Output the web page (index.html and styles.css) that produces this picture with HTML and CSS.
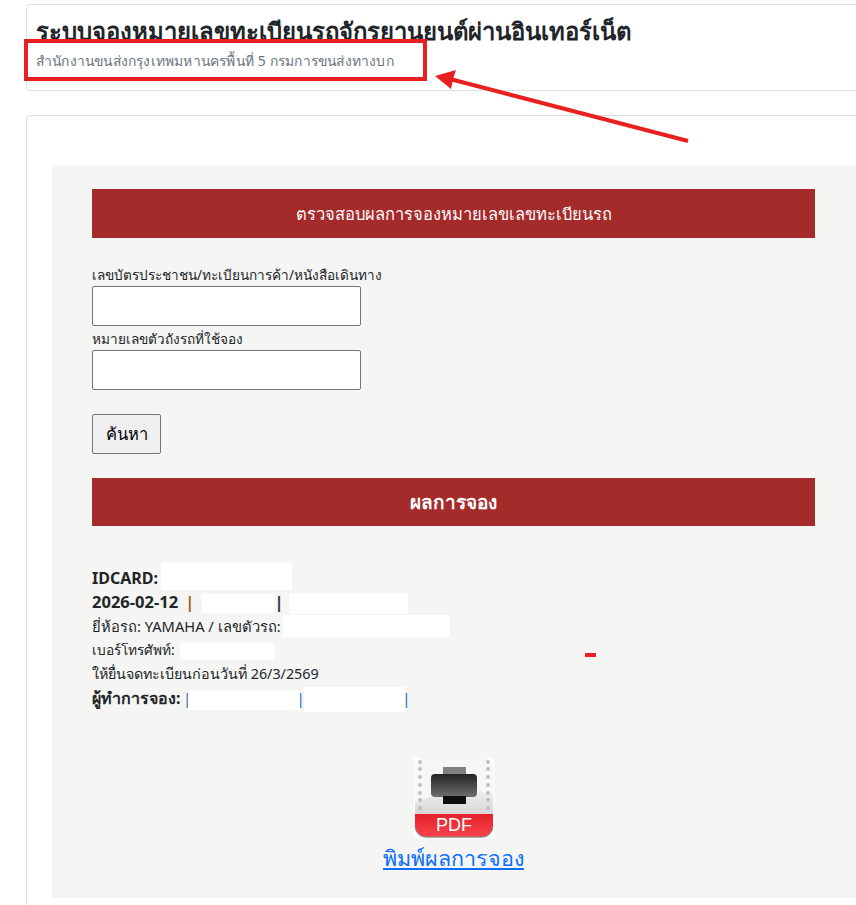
FILE: index.html
```html
<!DOCTYPE html>
<html lang="th">
<head>
    <meta charset="UTF-8">
    <meta name="viewport" content="width=device-width, initial-scale=1.0">
    <title>ตรวจสอบผลการจอง</title>
    <link rel="stylesheet" href="styles.css">
</head>
<body>
    <div class="page">
        <div class="card header-card">
            <h1>ระบบจองหมายเลขทะเบียนรถจักรยานยนต์ผ่านอินเทอร์เน็ต</h1>
            <p class="subtitle">สำนักงานขนส่งกรุงเทพมหานครพื้นที่ 5 กรมการขนส่งทางบก</p>
        </div>
        <div class="card main-card">
            <div class="panel">
                <div class="bar">ตรวจสอบผลการจองหมายเลขเลขทะเบียนรถ</div>
                <form class="search-form">
                    <label for="idcard">เลขบัตรประชาชน/ทะเบียนการค้า/หนังสือเดินทาง</label>
                    <input type="text" id="idcard">
                    <label for="plate">หมายเลขตัวถังรถที่ใช้จอง</label>
                    <input type="text" id="plate">
                    <button type="button">ค้นหา</button>
                </form>
                <div class="bar bar-bold">ผลการจอง</div>
                <div class="result">
                    <div class="row row-strong">IDCARD:</div>
                    <div class="row row-strong row-day">2026-02-12 <span class="sep-orange">|</span><span class="sep-dark">|</span></div>
                    <div class="row row-brand">ยี่ห้อรถ: YAMAHA / เลขตัวรถ:</div>
                    <div class="row row-phone">เบอร์โทรศัพท์:</div>
                    <div class="row row-date">ให้ยื่นจดทะเบียนก่อนวันที่ 26/3/2569</div>
                    <div class="row row-by"><strong>ผู้ทำการจอง:</strong> <span class="sep-blue sep-start">|</span><span class="sep-blue sep-mid">|</span><span class="sep-blue sep-end">|</span></div>
                    <span class="mask mask-id"></span>
                    <span class="mask mask-date-a"></span>
                    <span class="mask mask-date-b"></span>
                    <span class="mask mask-chassis"></span>
                    <span class="mask mask-phone"></span>
                    <span class="mask mask-by-a"></span>
                    <span class="mask mask-by-b"></span>
                    <span class="dash"></span>
                </div>
                <div class="print">
                    <svg class="pdf-icon" width="80" height="80" viewBox="0 0 80 80">
                        <defs>
                            <linearGradient id="body" x1="0" y1="0" x2="0" y2="1">
                                <stop offset="0" stop-color="#f4f4f4"/>
                                <stop offset="0.45" stop-color="#ececec"/>
                                <stop offset="0.7" stop-color="#d6d6d6"/>
                            </linearGradient>
                            <linearGradient id="red" x1="0" y1="0" x2="0" y2="1">
                                <stop offset="0" stop-color="#e5212a"/>
                                <stop offset="1" stop-color="#f8434c"/>
                            </linearGradient>
                            <linearGradient id="ink" x1="0" y1="0" x2="0" y2="1">
                                <stop offset="0" stop-color="#232323"/>
                                <stop offset="1" stop-color="#6e6e6e"/>
                            </linearGradient>
                        </defs>
                        <rect width="80" height="80" fill="#fff"/>
                        <rect x="1" y="0" width="78" height="80" rx="11" fill="url(#body)"/>
                        <path d="M1 11A11 11 0 0 1 12 0H68A11 11 0 0 1 79 11V36C60 30 25 34 1 44Z" fill="#f6f6f6"/>
                        <path d="M1 56H79V68A11 11 0 0 1 68 79H12A11 11 0 0 1 1 68Z" fill="url(#red)"/>
                        <path d="M1 68A11 11 0 0 0 12 79H68A11 11 0 0 0 79 68" fill="none" stroke="#8a8a8a" stroke-width="1"/>
                        <g fill="#bdbdbd">
                            <circle cx="6" cy="4" r="1.9"/><circle cx="6" cy="11" r="1.9"/><circle cx="6" cy="19" r="1.9"/><circle cx="6" cy="27" r="1.9"/><circle cx="6" cy="35" r="1.9"/><circle cx="6" cy="42" r="1.9"/><circle cx="6" cy="50" r="1.9"/>
                            <circle cx="74" cy="4" r="1.9"/><circle cx="74" cy="11" r="1.9"/><circle cx="74" cy="19" r="1.9"/><circle cx="74" cy="27" r="1.9"/><circle cx="74" cy="35" r="1.9"/><circle cx="74" cy="42" r="1.9"/><circle cx="74" cy="50" r="1.9"/>
                        </g>
                        <rect x="29" y="9" width="23" height="9" fill="#808080"/>
                        <rect x="17" y="16" width="46" height="23" rx="4" fill="url(#ink)"/>
                        <rect x="29" y="38" width="23" height="8" fill="#0d0d0d"/>
                        <text x="40" y="72.5" class="pdf-text" text-anchor="middle">PDF</text>
                    </svg>
                    <a href="#">พิมพ์ผลการจอง</a>
                </div>
            </div>
        </div>

        <!-- annotation drawn on the screenshot -->
        <svg class="annotation" width="856" height="180" viewBox="0 0 856 180">
            <rect x="26" y="41" width="399" height="38" fill="none" stroke="#e82020" stroke-width="4"/>
            <line x1="688" y1="141" x2="450" y2="79" stroke="#e82020" stroke-width="4"/>
            <polygon points="435,76 456,70 453,79 451,89" fill="#e82020"/>
        </svg>
    </div>
</body>
</html>
```

FILE: styles.css
```css
* {
    box-sizing: border-box;
}
html, body {
    overflow: hidden;
}
body {
    margin: 0;
    background-color: #fff;
    color: #212529;
    font-family: "Noto Sans", "Open Sans", sans-serif;
    font-size: 14px;
}
.page {
    position: relative;
    width: 856px;
    height: 905px;
    overflow: hidden;
    padding: 4px 0 0 26px;
}
.card {
    width: 860px;
    background-color: #fff;
    border: 1px solid #dfdfdf;
    border-radius: 4px;
}
.header-card {
    height: 87px;
    padding: 10px 9px;
}
h1 {
    margin: 0;
    font-size: 23.85px;
    line-height: 32px;
    font-weight: 700;
    white-space: nowrap;
}
.subtitle {
    margin: 4px 0 0;
    font-size: 13.9px;
    letter-spacing: 0.2px;
    line-height: 20px;
    color: #6c757d;
}
.main-card {
    margin-top: 24px;
    height: 800px;
    padding: 49px 0 0 25px;
}
.panel {
    width: 804px;
    height: 733px;
    padding: 24px 41px 0 40px;
    background-color: #f5f5f3;
}
.bar {
    height: 49px;
    display: flex;
    align-items: center;
    justify-content: center;
    background-color: #a52a2a;
    color: #fff;
    font-size: 16.5px;
    font-weight: 500;
}
.bar-bold {
    height: 48px;
    font-size: 19px;
    font-weight: 700;
}
.search-form {
    padding-top: 27px;
    height: 240px;
}
label {
    display: block;
    line-height: 20px;
    padding-bottom: 1px;
    font-size: 13.6px;
}
input {
    display: block;
    width: 269px;
    height: 40px;
    margin-bottom: 3px;
    border: 1px solid #767676;
    border-radius: 2px;
    background-color: #fff;
}
button {
    display: block;
    margin-top: 24px;
    height: 40px;
    width: 69px;
    padding: 0;
    border: 1px solid #767676;
    border-radius: 2px;
    background-color: #efefef;
    color: #000;
    font-family: inherit;
    font-size: 16.5px;
}
.result {
    position: relative;
    padding-top: 40px;
    line-height: 24px;
}
.row {
    height: 24px;
    white-space: nowrap;
}
.row-strong {
    font-weight: 700;
    font-size: 16px;
}
.row-day {
    font-size: 16.5px;
}
.row-brand {
    font-size: 14.7px;
}
.row-phone {
    font-size: 13.7px;
}
.row-date {
    font-size: 14.3px;
}
.row-by strong {
    font-size: 16px;
}
.sep-orange {
    color: #a5600f;
    margin-left: 3px;
}
.sep-dark {
    color: #3a2a4a;
    margin-left: 80px;
}
.sep-blue {
    color: #1565b5;
}
.sep-start {
    margin-left: -1px;
}
.sep-mid {
    margin-left: 106px;
}
.sep-end {
    margin-left: 98px;
}
.mask {
    position: absolute;
    background-color: #fff;
}
.mask-id { left: 69px; top: 37px; width: 131px; height: 27px; }
.mask-date-a { left: 110px; top: 68px; width: 72px; height: 19px; }
.mask-date-b { left: 197px; top: 67px; width: 119px; height: 21px; }
.mask-chassis { left: 191px; top: 89px; width: 167px; height: 22px; }
.mask-phone { left: 88px; top: 117px; width: 95px; height: 17px; }
.mask-by-a { left: 96px; top: 165px; width: 112px; height: 19px; }
.mask-by-b { left: 212px; top: 161px; width: 101px; height: 25px; }
.dash {
    position: absolute;
    left: 493px;
    top: 127px;
    width: 11px;
    height: 4px;
    background-color: #f01f25;
}
.print {
    margin-top: 48px;
    display: flex;
    flex-direction: column;
    align-items: center;
    width: 723px;
}
.pdf-icon {
    display: block;
}
.pdf-text {
    fill: #fff;
    font-family: "Liberation Sans", sans-serif;
    font-size: 18px;
}
.print a {
    color: #0d6efd;
    font-size: 21.5px;
    line-height: 30px;
    margin-top: 5px;
}
.annotation {
    position: absolute;
    left: 0;
    top: 0;
}
```
